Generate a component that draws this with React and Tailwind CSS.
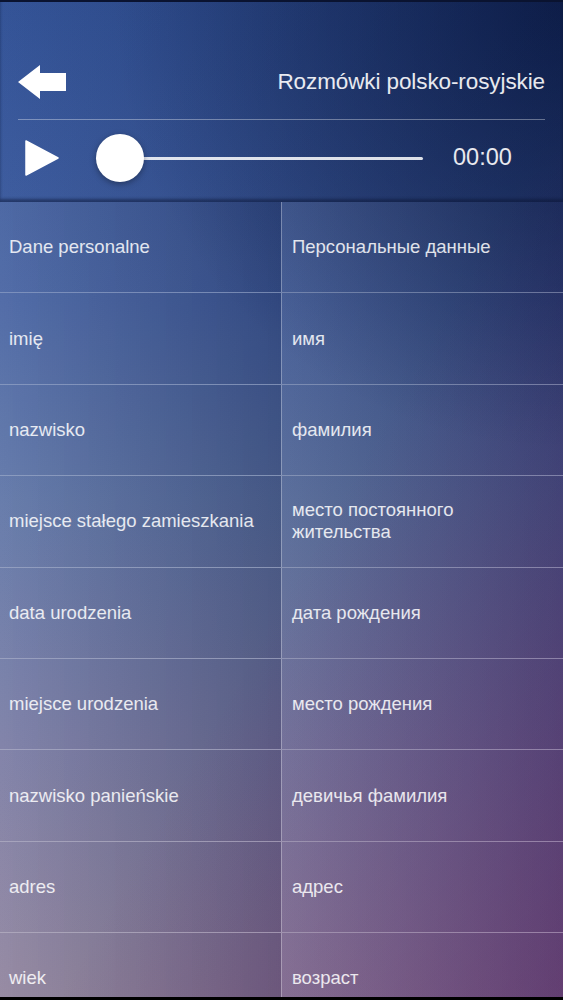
const rows = [
  ['Dane personalne', 'Персональные данные'],
  ['imię', 'имя'],
  ['nazwisko', 'фамилия'],
  ['miejsce stałego zamieszkania', 'место постоянного жительства'],
  ['data urodzenia', 'дата рождения'],
  ['miejsce urodzenia', 'место рождения'],
  ['nazwisko panieńskie', 'девичья фамилия'],
  ['adres', 'адрес'],
  ['wiek', 'возраст'],
];

function BackArrow() {
  return (
    <svg width="48" height="34" viewBox="0 0 48 34">
      <path d="M0 17 L22 0 L22 8 L48 8 L48 26 L22 26 L22 34 Z" fill="white" />
    </svg>
  );
}

function PlayIcon() {
  return (
    <svg width="34" height="36" viewBox="0 0 34 36">
      <path d="M1 1 L33 18 L1 35 Z" fill="white" strokeLinejoin="round" stroke="white" strokeWidth="1.5" />
    </svg>
  );
}

export default function App() {
  return (
    <div
      className="relative w-[563px] h-[1000px] overflow-hidden text-white bg-[radial-gradient(ellipse_80%_45%_at_100%_0%,rgba(0,10,45,0.55),transparent),linear-gradient(to_bottom_right,transparent_55%,rgba(120,40,130,0.45)_100%),linear-gradient(to_right,rgba(220,220,240,0.04),rgba(5,10,40,0.25)),linear-gradient(to_bottom,#2c4c90_0%,#3e5c9e_30%,#566ea2_50%,#7476a0_75%,#8c7e98_100%)]"
      style={{ fontFamily: '"Liberation Sans", Arial, "Noto Sans", sans-serif' }}
    >
      {/* Header */}
      <div className="h-[202px] border-t-2 border-[#0a1330] px-[18px] bg-[linear-gradient(to_right,rgba(60,100,180,0.1),rgba(0,10,40,0.15))] shadow-[inset_0_-3px_3px_rgba(10,20,50,0.5)]">
        <div className="flex items-center justify-between h-[117px] pt-[42px]">
          <BackArrow />
          <span className="text-[22.5px] text-white/90 tracking-[-0.1px]">Rozmówki polsko-rosyjskie</span>
        </div>
        <div className="h-px bg-white/35" />
        <div className="flex items-center h-[76px]">
          <div className="ml-[7px] w-[34px] flex">
            <PlayIcon />
          </div>
          <div className="relative ml-[37px] w-[327px] h-[48px] flex items-center">
            <div className="w-full h-[3px] bg-white/85 rounded" />
            <div className="absolute left-0 top-0 w-[48px] h-[48px] rounded-full bg-white shadow-[0_2px_6px_rgba(0,0,0,0.35)]" />
          </div>
          <span className="ml-[30px] text-[23.5px] text-white/90">00:00</span>
        </div>
      </div>

      {/* Table */}
      <div className="flex flex-col">
        {rows.map(([pl, ru], i) => (
          <div key={i} className="flex h-[91.4px] border-b-[1.5px] border-white/30 shrink-0">
            <div className="w-[282px] border-r-[1.5px] border-white/30 flex items-center pl-[9px] pr-2 text-[18.5px] text-white/85 bg-[linear-gradient(to_right,rgba(255,255,255,0.08),rgba(0,0,20,0.12))]">
              {pl}
            </div>
            <div className="flex-1 flex items-center pl-[10px] pr-3 text-[18.5px] leading-[22px] text-white/85 bg-[linear-gradient(to_right,rgba(255,255,255,0.08),rgba(0,0,20,0.12))]">
              <span className="max-w-[210px]">{ru}</span>
            </div>
          </div>
        ))}
      </div>
      <div className="absolute left-0 bottom-0 w-full h-[3px] bg-black" />
    </div>
  );
}
